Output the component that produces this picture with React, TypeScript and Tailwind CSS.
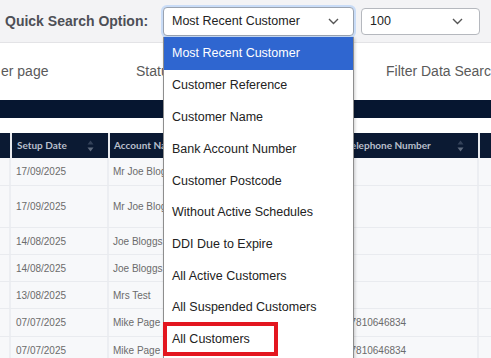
import React from 'react';

const options = [
  'Most Recent Customer',
  'Customer Reference',
  'Customer Name',
  'Bank Account Number',
  'Customer Postcode',
  'Without Active Schedules',
  'DDI Due to Expire',
  'All Active Customers',
  'All Suspended Customers',
  'All Customers',
];

type Row = { date: string; name: string; phone: string; h: string };

const rows: Row[] = [
  { date: '17/09/2025', name: 'Mr Joe Bloggs', phone: '', h: 'h-[28px]' },
  { date: '17/09/2025', name: 'Mr Joe Bloggs', phone: '', h: 'h-[42px]' },
  { date: '14/08/2025', name: 'Joe Bloggs', phone: '', h: 'h-[27px]' },
  { date: '14/08/2025', name: 'Joe Bloggs', phone: '', h: 'h-[27px]' },
  { date: '13/08/2025', name: 'Mrs Test', phone: '', h: 'h-[27px]' },
  { date: '07/07/2025', name: 'Mike Page', phone: '07810646834', h: 'h-[28px]' },
  { date: '07/07/2025', name: 'Mike Page', phone: '07810646834', h: 'h-[28px]' },
];

function Chevron() {
  return (
    <svg width="11" height="7" viewBox="0 0 11 7" fill="none">
      <path d="M1 1l4.5 4.5L10 1" stroke="#555" strokeWidth="1.4" />
    </svg>
  );
}

function SortIcon() {
  return (
    <svg width="7" height="12" viewBox="0 0 7 12">
      <path d="M3.5 0.5L6.5 4.5H0.5z" fill="#34425a" />
      <path d="M3.5 11.5L6.5 7.5H0.5z" fill="#5f6b7e" />
    </svg>
  );
}

export default function App() {
  return (
    <div
      className="relative w-[491px] h-[358px] overflow-hidden bg-white"
      style={{ fontFamily: '"Liberation Sans", Arial, sans-serif' }}
    >
      {/* Top bar */}
      <div className="flex items-center h-[43px] bg-[#f3f3f5] border-b border-[#e3e3e6]">
        <div className="w-[163px] shrink-0 pl-[5px] text-[14px] font-bold text-[#4d4f56] whitespace-nowrap">
          Quick Search Option:
        </div>
        <div className="flex items-center justify-between w-[191px] h-[29px] px-[8px] bg-white border border-[#9aa3b0] rounded-[4px] shadow-[0_0_0_2px_#c9dcf7] text-[12.5px] text-[#222]">
          <span>Most Recent Customer</span>
          <span className="mr-[6px]"><Chevron /></span>
        </div>
        <div className="flex items-center justify-between ml-[7px] w-[119px] h-[27px] px-[8px] bg-white border border-[#b5b8be] rounded-[4px] text-[12.5px] text-[#222]">
          <span>100</span>
          <span className="mr-[8px]"><Chevron /></span>
        </div>
      </div>

      {/* Filters row */}
      <div className="flex items-center h-[56px] text-[14px] text-[#5a5a5a] whitespace-nowrap">
        <span className="shrink-0 pl-[1px] w-[136px]">er page</span>
        <span className="shrink-0 w-[250px]">Status</span>
        <span className="shrink-0">Filter Data Search</span>
      </div>

      {/* Dark bar */}
      <div className="h-[18px] bg-[#061630] mt-[1px]" />

      {/* Table */}
      <div className="mt-[15px] text-[10px]">
        <div className="flex h-[25px] bg-[#e9ebef] gap-[2px]" style={{ fontFamily: 'Lato, sans-serif' }}>
          <div className="w-[10px] bg-[#0b1a33]" />
          <div className="flex items-center justify-between w-[96px] bg-[#0b1a33] pl-[5px] pr-[14px] font-bold text-[#b8bfcb]">
            <span>Setup Date</span>
            <SortIcon />
          </div>
          <div className="flex items-center w-[228px] bg-[#0b1a33] pl-[4px] font-bold text-[#b8bfcb]">
            Account Name
          </div>
          <div className="flex items-center justify-between w-[138px] bg-[#0b1a33] pl-[6px] pr-[14px] font-bold text-[#b8bfcb]">
            <span>Telephone Number</span>
            <SortIcon />
          </div>
          <div className="flex-1 bg-[#0b1a33]" />
        </div>
        {rows.map((r, i) => (
          <div key={i} className={`flex ${r.h} bg-[#f7f8fa] border-b border-[#e9ebef] text-[#6b6b6b]`}>
            <div className="w-[11px] border-r-2 border-[#eceef2]" />
            <div className="flex items-center w-[98px] pl-[5px] border-r-2 border-[#eceef2]">{r.date}</div>
            <div className="flex items-center w-[230px] pl-[4px] border-r-2 border-[#eceef2] whitespace-nowrap">{r.name}</div>
            <div className="flex items-center w-[140px] pl-[6px] border-r-2 border-[#eceef2]">{r.phone}</div>
            <div className="flex-1" />
          </div>
        ))}
      </div>

      {/* Dropdown list */}
      <div className="absolute left-[163px] top-[37px] w-[191px] h-[330px] bg-white border border-[#8e8e8e] border-t-0 shadow-[1px_1px_3px_rgba(0,0,0,0.2)] text-[12.5px] text-[#222]">
        {options.map((o, i) => (
          <div
            key={o}
            className={
              i === 0
                ? 'flex items-center h-[33px] pl-[8px] bg-[#2f66d0] text-white'
                : 'relative flex items-center h-[31.7px] pl-[8px]'
            }
          >
            {o}
            {o === 'All Customers' && (
              <div className="absolute left-[-1px] top-[-2px] w-[115px] h-[34px] border-4 border-[#e3161f]" />
            )}
          </div>
        ))}
      </div>
    </div>
  );
}
